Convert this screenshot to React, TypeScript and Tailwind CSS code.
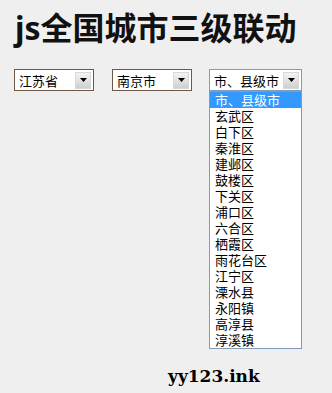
import { ReactNode } from "react";

const districts = [
  "市、县级市",
  "玄武区",
  "白下区",
  "秦淮区",
  "建邺区",
  "鼓楼区",
  "下关区",
  "浦口区",
  "六合区",
  "栖霞区",
  "雨花台区",
  "江宁区",
  "溧水县",
  "永阳镇",
  "高淳县",
  "淳溪镇",
];

const cjk = { fontFamily: '"Noto Sans CJK SC", "Noto Sans", sans-serif' };

const Arrow = () => (
  <div className="flex h-[17px] w-[16px] items-center justify-center border border-[#d8d8d8] bg-gradient-to-b from-[#f4f4f4] to-[#cfcfcf]">
    <svg width="7" height="4" viewBox="0 0 7 4">
      <path d="M0 0h7L3.5 4z" fill="#000" />
    </svg>
  </div>
);

const FakeSelect = ({ children, width, border }: { children: ReactNode; width: string; border: string }) => (
  <div className={`flex h-[22px] items-center justify-between border bg-white pl-[4px] pr-[2px] ${width} ${border}`}>
    <span className="text-[13px] leading-none text-black" style={cjk}>
      {children}
    </span>
    <Arrow />
  </div>
);

export default function App() {
  return (
    <div className="relative h-[393px] w-[332px] overflow-hidden bg-[#efefef]">
      <h1
        className="pl-[15px] pt-[6px] text-[32px] font-bold leading-[44px] text-[#111]"
        style={{ fontFamily: '"Noto Sans", "Noto Sans CJK SC", sans-serif' }}
      >
        js全国城市三级联动
      </h1>

      <div className="mt-[19px] flex items-start pl-[14px]">
        <FakeSelect width="w-[80px]" border="border-[#6f5646]">江苏省</FakeSelect>
        <div className="ml-[18px]">
          <FakeSelect width="w-[80px]" border="border-[#6f5646]">南京市</FakeSelect>
        </div>
        <div className="relative ml-[17px]">
          <FakeSelect width="w-[93px]" border="border-[#7f9db9]">市、县级市</FakeSelect>
          <ul className="absolute left-0 top-[22px] w-[93px] border border-[#7f9db9] bg-white" style={cjk}>
            {districts.map((d, i) => (
              <li
                key={d}
                className={`flex h-[16px] items-center pl-[5px] text-[13px] leading-[14px] ${
                  i === 0 ? "bg-[#3399ff] text-white" : "text-black"
                }`}
              >
                {d}
              </li>
            ))}
          </ul>
        </div>
      </div>

      <div
        className="absolute left-[168px] top-[364px] text-[17px] font-black text-black"
        style={{ fontFamily: '"DejaVu Serif", serif' }}
      >
        yy123.ink
      </div>
    </div>
  );
}
